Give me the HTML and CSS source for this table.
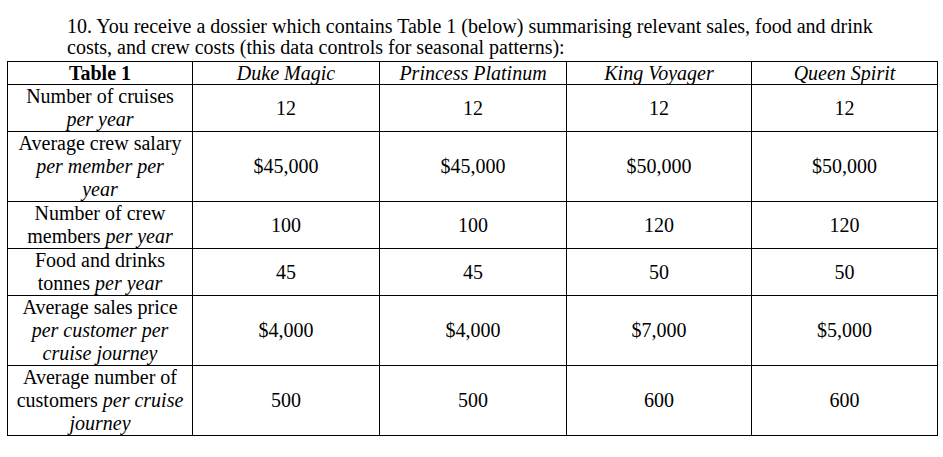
FILE: index.html
```html
<!DOCTYPE html>
<html>
<head>
<meta charset="utf-8">
<link rel="stylesheet" href="styles.css">
</head>
<body>
<div class="page">
  <p class="question">10. You receive a dossier which contains Table 1 (below) summarising relevant sales, food and drink<br>costs, and crew costs (this data controls for seasonal patterns):</p>
  <table class="data">
    <colgroup>
      <col class="c1"><col class="c2"><col class="c3"><col class="c4"><col class="c5">
    </colgroup>
    <thead>
      <tr class="r-head">
        <th class="label-head">Table 1</th>
        <th><i>Duke Magic</i></th>
        <th><i>Princess Platinum</i></th>
        <th><i>King Voyager</i></th>
        <th><i>Queen Spirit</i></th>
      </tr>
    </thead>
    <tbody>
      <tr>
        <td class="label">Number of cruises<br><i>per year</i></td>
        <td>12</td><td>12</td><td>12</td><td>12</td>
      </tr>
      <tr>
        <td class="label">Average crew salary<br><i>per member per<br>year</i></td>
        <td>$45,000</td><td>$45,000</td><td>$50,000</td><td>$50,000</td>
      </tr>
      <tr>
        <td class="label">Number of crew<br>members <i>per year</i></td>
        <td>100</td><td>100</td><td>120</td><td>120</td>
      </tr>
      <tr>
        <td class="label">Food and drinks<br>tonnes <i>per year</i></td>
        <td>45</td><td>45</td><td>50</td><td>50</td>
      </tr>
      <tr>
        <td class="label">Average sales price<br><i>per customer per<br>cruise journey</i></td>
        <td>$4,000</td><td>$4,000</td><td>$7,000</td><td>$5,000</td>
      </tr>
      <tr>
        <td class="label">Average number of<br>customers <i>per cruise<br>journey</i></td>
        <td>500</td><td>500</td><td>600</td><td>600</td>
      </tr>
    </tbody>
  </table>
</div>
</body>
</html>
```

FILE: styles.css
```css
html, body {
  margin: 0;
  padding: 0;
  background: #ffffff;
}

body {
  font-family: "Liberation Serif", "Times New Roman", serif;
  font-size: 20px;
  color: #000000;
}

.page {
  padding: 16px 0 0 7px;
}

.question {
  margin: 0 0 3px 0;
  padding-left: 60px;
  line-height: 21px;
  white-space: nowrap;
}

.data {
  border-collapse: collapse;
  width: 930px;
  table-layout: fixed;
}

.c1 { width: 185px; }
.c2 { width: 187px; }
.c3 { width: 187px; }
.c4 { width: 185px; }
.c5 { width: 186px; }

.data th,
.data td {
  border: 1px solid #000000;
  padding: 0;
  text-align: center;
  vertical-align: middle;
  line-height: 23px;
  font-weight: normal;
}

.data th.label-head {
  font-weight: bold;
}

.data i {
  font-style: italic;
}

.r-head th {
  height: 22px;
  line-height: 22px;
}
```
